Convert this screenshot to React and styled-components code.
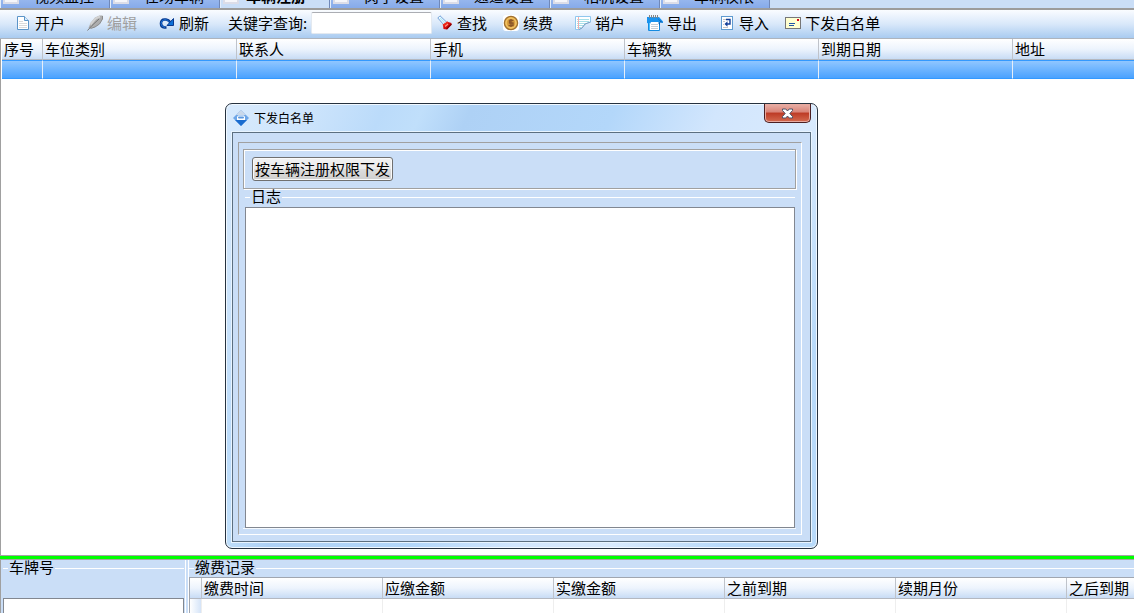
import React from 'react';
import styled, { createGlobalStyle } from 'styled-components';

const GlobalStyle = createGlobalStyle`
* { box-sizing: border-box; }
body {
  margin: 0;
  overflow: hidden;
  background: #ffffff;
  color: #000000;
  font-family: 'Noto Sans CJK SC', sans-serif;
  font-size: 15px;
}
button, input, textarea { font: inherit; color: inherit; }
`

const Page = styled.div`
display: flex;
flex-direction: column;
height: 100vh;
overflow: hidden;
`

const TabBar = styled.nav`
display: flex;
flex-shrink: 0;
align-items: flex-end;
height: 10px;
overflow: hidden;
background: #cadef7;
border-bottom: 2px solid #9c9c9c;
`

const Tab = styled.button`
display: flex;
flex-shrink: 0;
align-items: flex-end;
gap: ${props => (props.$active ? '7px' : '15px')};
width: 110px;
height: 24px;
padding: 0 0 4px 2px;
border: 0;
border-left: 1px solid #e4eefb;
border-right: 1px solid #7088b8;
background: ${props => (props.$active ? '#cadef7' : 'linear-gradient(#b6cff5, #86aaea)')};
font-weight: ${props => (props.$active ? 700 : 400)};
line-height: 16px;
white-space: nowrap;
`

const TabIcon = styled.span`
width: 16px;
height: 16px;
flex-shrink: 0;
border: 2px solid #dcdde8;
background: #f6f6fa;
`

const Toolbar = styled.div`
display: flex;
flex-shrink: 0;
align-items: center;
height: 29px;
padding: 0 0 2px 4px;
background: linear-gradient(#fafcff, #d9e8fa 50%, #a9cbf0);
border-bottom: 1px solid #aeb4bd;
`

const ToolButton = styled.button`
display: flex;
flex-shrink: 0;
align-items: center;
gap: 4px;
height: 26px;
padding: 0 11px 0 ${props => (props.$tight ? '5px' : '11px')};
border: 0;
background: transparent;
line-height: 20px;
white-space: nowrap;
&:disabled { color: #a0a0a0; }
svg { width: 16px; height: 16px; flex-shrink: 0; }
`

const SearchLabel = styled.label`
width: 91px;
padding-left: 8px;
line-height: 20px;
white-space: nowrap;
`

const SearchInput = styled.input`
width: 121px;
height: 22px;
padding: 0 3px;
border: 1px solid #e3e9f0;
border-top-color: #abadb3;
border-radius: 2px;
background: #ffffff;
`

const GridPanel = styled.main`
flex: 1;
min-height: 0;
overflow: hidden;
padding-left: 1px;
border-left: 1px solid #a0a0a0;
background: #ffffff;
`

const Grid = styled.table`
table-layout: fixed;
width: max-content;
min-width: ${props => props.$width}px;
border-collapse: separate;
border-spacing: 0;
`

const Column = styled.col`
width: ${props => props.$width}px;
`

const HeadCell = styled.th`
height: 21px;
padding: 0 0 0 2px;
border-right: 1px solid #bfc3ca;
border-bottom: 1px solid #b4b8c0;
background: linear-gradient(#ffffff, #edf4fd 50%, #c8dcf5);
font-weight: 400;
line-height: 18px;
text-align: left;
white-space: nowrap;
`

const SelectedCell = styled.td`
height: 19px;
padding: 0;
border-top: 1px solid #3399ff;
border-bottom: 1px solid #3399ff;
border-right: 1px solid #e6eef8;
background: linear-gradient(#90c6ff, #4aa2ff);
`

const EmptyCell = styled.td`
height: 20px;
padding: 0;
border-right: 1px solid #eeeeee;
background: ${props => (props.$marker ? 'linear-gradient(90deg, #ffffff, #d5e4f8)' : '#ffffff')};
`

const Splitter = styled.div`
flex-shrink: 0;
height: 5px;
background: #00ff00;
border-top: 1px solid #a4a4a4;
border-bottom: 1px solid #a4a4a4;
`

const BottomPane = styled.div`
display: flex;
flex-shrink: 0;
gap: 2px;
height: 53px;
overflow: hidden;
background: #cadef7;
border-left: 1px solid #a0a0a0;
`

const PlatePane = styled.section`
display: flex;
flex-direction: column;
width: 185px;
flex-shrink: 0;
padding: 0 1px 0 2px;
border-right: 1px solid #ffffff;
`

const RecordPane = styled.section`
flex: 1;
min-width: 0;
overflow: hidden;
border-left: 1px solid #ffffff;
`

const GroupTitle = styled.div`
display: flex;
flex-shrink: 0;
align-items: flex-start;
gap: 1px;
height: ${props => props.$height}px;
line-height: 14px;
white-space: nowrap;
&::before { content: ''; width: 5px; margin-top: 8px; border-top: 1px solid #ffffff; }
&::after { content: ''; flex: 1; margin-top: 8px; border-top: 1px solid #ffffff; }
`

const PlateList = styled.textarea`
width: 181px;
height: 60px;
flex-shrink: 0;
margin-top: 21px;
border: 1px solid #828790;
background: #ffffff;
resize: none;
`

const RecordGrid = styled.div`
border-top: 1px solid #a0a6b0;
border-left: 1px solid #a0a6b0;
background: #ffffff;
`

const Dialog = styled.div`
position: absolute;
left: 225px;
top: 103px;
display: flex;
flex-direction: column;
width: 593px;
padding: 0 6px 6px;
border: 1px solid #26323f;
border-radius: 7px;
background: linear-gradient(115deg, #d8eafd 0, #d0e6fc 9%, #bbdbfa 20%, #c0dffb 25%, #aed1f5 31%, #b3d7fa 49%, #d2e6fd 62%, #d9eafd 74%, #b8dafa 88%);
box-shadow: inset 0 0 0 1px #f0f8ff;
`

const TitleBar = styled.header`
display: flex;
align-items: flex-start;
height: 28px;
padding-left: 1px;
font-size: 12px;
svg { width: 16px; height: 16px; margin-top: 6px; }
`

const DialogTitle = styled.h1`
flex: 1;
margin: 0;
padding: 5px 0 0 5px;
font-size: 12px;
font-weight: 400;
line-height: 18px;
`

const CloseButton = styled.button`
display: flex;
align-items: center;
justify-content: center;
width: 47px;
height: 19px;
padding: 0;
border: 1px solid #4b1f22;
border-top: 0;
border-radius: 0 0 5px 5px;
background: linear-gradient(#e9b1a8, #d98377 45%, #bd3a25 50%, #d46b50);
box-shadow: inset 0 0 0 1px #e8aaa0;
&& svg { width: 13px; height: 11px; margin: 0; }
`

const DialogBody = styled.div`
padding: 9px 8px 6px 5px;
border: 1px solid #5c6f80;
background: #cadef7;
outline: 1px solid #e8f4ff;
`

const Sunken = styled.div`
padding: 6px 5px 5px 4px;
border: 1px solid #ffffff;
border-top-color: #a0a0a0;
border-left-color: #a0a0a0;
`

const ActionBox = styled.div`
display: flex;
align-items: center;
height: 40px;
padding-left: 8px;
border: 1px solid #a0a0a0;
box-shadow: inset 1px 1px #ffffff, 1px 1px #ffffff;
`

const SendButton = styled.button`
height: 24px;
padding: 0 2px;
border: 1px solid #707070;
border-radius: 3px;
background: linear-gradient(#f2f2f2, #ebebeb 50%, #dddddd 50%, #cfcfcf);
box-shadow: inset 0 0 0 1px #fafafa;
line-height: 20px;
white-space: nowrap;
`

const LogGroup = styled.div`
padding: 0 1px 0 2px;
border-bottom: 1px solid #f5faff;
`

const LogBox = styled.textarea`
display: block;
width: 100%;
height: 321px;
border: 1px solid #828790;
background: #ffffff;
resize: none;
`

const PageIcon = () => (
  <svg viewBox="0 0 16 16">
    <path d="M2.500 1.500H9.500L13.500 5.500V14.500H2.500Z" fill="#fff" stroke="#5b94c8" />
    <path d="M9.500 1.500V5.500H13.500" fill="#d9ecfb" stroke="#5b94c8" />
    <path d="M4 6.500H8M4 8.500H12M4 10.500H12M4 12.500H12" stroke="#dadada" />
  </svg>
)

const QuillIcon = () => (
  <svg viewBox="0 0 16 16">
    <path d="M1.500 13L3.500 8L8 2.500L12.500 0.500H15.500V4L12.500 9L8 12L3.500 13.500Z" fill="#adadad" />
    <path d="M3.500 9.500L8.500 3.500L13 1.500" stroke="#d2d2d2" strokeWidth="2" fill="none" />
    <path d="M15.500 1V4L12.500 9L8 12L3.500 13.500" stroke="#8a8a8a" fill="none" />
    <path d="M0.500 15.500L5 10.500L12 4" stroke="#777777" fill="none" />
  </svg>
)

const RefreshIcon = () => (
  <svg viewBox="0 0 16 16">
    <path d="M7.500 12.500H5.500Q2 12 2 8.500Q2 4.500 5.500 4.500H7Q9.500 4.800 11.500 7.500" fill="none" stroke="#08398f" strokeWidth="2.600" />
    <path d="M6 12.500Q2 11.500 2 8.500Q2.300 5 6 4.500Q9 4.800 11 7.500" fill="none" stroke="#1c72d8" strokeWidth="1" />
    <path d="M14.500 3.500V10.500H8Z" fill="#0c70d8" stroke="#08398f" />
  </svg>
)

const TorchIcon = () => (
  <svg viewBox="0 0 16 16">
    <path d="M0.800 3L3 0.800L10 7.500L7.500 10.500Z" fill="#f4fcff" stroke="#6f9fd8" />
    <path d="M3 3L8 8" stroke="#b5e8f8" strokeWidth="1.200" />
    <path d="M6 9.500L11 7L14.500 8L14 10L10 14.500L6.500 14Z" fill="#d50c0c" />
    <path d="M6 10.500L11 7" stroke="#ee2a1a" strokeWidth="2" />
    <path d="M8 11.500L11 9" stroke="#ff9a84" strokeWidth="1.200" />
    <path d="M9.500 14L14.500 9" stroke="#8a0000" strokeWidth="1.500" />
  </svg>
)

const CoinIcon = () => (
  <svg viewBox="0 0 16 16">
    <rect width="16" height="16" rx="3" fill="#fff" />
    <circle cx="8" cy="8" r="6.600" fill="#eeb64c" stroke="#a07030" strokeWidth="1.300" />
    <circle cx="8" cy="8" r="4.900" fill="#dca03d" stroke="#f5cb72" />
    <path d="M10.500 5.500H6.500V8H10V10.500H5.500M8 4V12" fill="none" stroke="#8b5627" strokeWidth="1.400" />
  </svg>
)

const SheetIcon = () => (
  <svg viewBox="0 0 16 16">
    <path d="M0.500 1.500H15.500V7L10 9L7 13L4 14.500H0.500Z" fill="#fff" stroke="#8fc7ee" />
    <path d="M2 4.500H14M2 6.500H14M2 8.500H10M2 10.500H8M2 12.500H6" stroke="#a6dfe8" />
    <path d="M3.500 2V14" stroke="#f5aeae" />
    <path d="M15.500 7L10 9L7 13L4 14.500" fill="none" stroke="#7e9fc1" />
  </svg>
)

const NotepadIcon = () => (
  <svg viewBox="0 0 16 16">
    <path d="M1.500 3.500H12.500V15.500H1.500Z" fill="#fff" stroke="#168be0" />
    <path d="M0 2H12L16 6.500V8L12 7H4L3 9L0 8Z" fill="#1a93ee" />
    <path d="M10 3L16 7.500H11L13 11V6Z" fill="#0764b8" />
    <path d="M2.500 0V3M4.500 0V3M6.500 0V3M8.500 0V3M10.500 0V3" stroke="#858585" />
    <path d="M4 9.500H11M4 11.500H11M4 13.500H11" stroke="#c4ced6" />
    <path d="M2.500 8V15" stroke="#4ac0ff" />
  </svg>
)

const ImportIcon = () => (
  <svg viewBox="0 0 16 16">
    <rect x="2.500" y="1.500" width="11" height="13" fill="#fff" stroke="#5f9bd0" />
    <path d="M4 4.500H7M4 6.500H6M4 9.500H5M4 12.500H9" stroke="#c4c4c4" />
    <path d="M7 4.500H11V9H8" fill="none" stroke="#123e98" strokeWidth="1.400" />
    <path d="M5.500 9L8.500 6.300V11.700Z" fill="#123e98" />
  </svg>
)

const LetterIcon = () => (
  <svg viewBox="0 0 16 16">
    <rect x="0.500" y="2.500" width="15" height="11" fill="#ffffd0" stroke="#777777" />
    <path d="M4 8.500H10M4 10.500H9" stroke="#1f56a8" />
    <rect x="12" y="4" width="2" height="2" fill="#d80020" />
  </svg>
)

const AppIcon = () => (
  <svg viewBox="0 0 16 16">
    <path d="M8 0L16 8L8 16L0 8Z" fill="#6ea6e8" />
    <path d="M8 0L13 5H3Z" fill="#c9d8ea" />
    <path d="M2 10L8 16L14 10Z" fill="#1a6ccf" />
    <path d="M5 5.500H11L12 7V10H4V7Z" fill="#fff" />
    <rect x="5" y="6.500" width="6" height="2" rx="1" fill="#5b97df" />
  </svg>
)

const CrossIcon = () => (
  <svg viewBox="0 0 13 11">
    <path d="M1.500 1H4.800L6.500 3L8.200 1H11.500V2.500L8.800 5.500L11.500 8.500V10H8.200L6.500 8L4.800 10H1.500V8.500L4.200 5.500L1.500 2.500Z" fill="#fff" stroke="#4d5368" />
  </svg>
)

const tabs = ['视频监控', '在场车辆', '车辆注册', '岗亭设置', '通道设置', '相机设置', '车辆权限']
const columns = ['序号', '车位类别', '联系人', '手机', '车辆数', '到期日期', '地址']
const records = ['', '缴费时间', '应缴金额', '实缴金额', '之前到期', '续期月份', '之后到期']

const columnWidth = (i) => (i === 0 ? 41 : 194)
const recordWidth = (i) => (i === 0 ? 12 : i === 1 ? 181 : 171)

export default function App() {
  return (
    <Page>
      <GlobalStyle />
      <TabBar>
        {tabs.map((name) => (
          <Tab key={name} type="button" $active={name === '车辆注册'}>
            <TabIcon />{name}
          </Tab>
        ))}
      </TabBar>

      <Toolbar>
        <ToolButton type="button"><PageIcon />开户</ToolButton>
        <ToolButton type="button" disabled><QuillIcon />编辑</ToolButton>
        <ToolButton type="button"><RefreshIcon />刷新</ToolButton>
        <SearchLabel htmlFor="keyword">关键字查询:</SearchLabel>
        <SearchInput id="keyword" type="text" />
        <ToolButton type="button" $tight><TorchIcon />查找</ToolButton>
        <ToolButton type="button" $tight><CoinIcon />续费</ToolButton>
        <ToolButton type="button"><SheetIcon />销户</ToolButton>
        <ToolButton type="button"><NotepadIcon />导出</ToolButton>
        <ToolButton type="button"><ImportIcon />导入</ToolButton>
        <ToolButton type="button" $tight><LetterIcon />下发白名单</ToolButton>
      </Toolbar>

      <GridPanel>
        <Grid $width={1205}>
          <colgroup>
            {columns.map((name, i) => <Column key={name} $width={columnWidth(i)} />)}
          </colgroup>
          <thead>
            <tr>{columns.map((name) => <HeadCell key={name}>{name}</HeadCell>)}</tr>
          </thead>
          <tbody>
            <tr>{columns.map((name) => <SelectedCell key={name} />)}</tr>
          </tbody>
        </Grid>
      </GridPanel>

      <Splitter />

      <BottomPane>
        <PlatePane>
          <GroupTitle $height={17}><label htmlFor="plates">车牌号</label></GroupTitle>
          <PlateList id="plates" />
        </PlatePane>
        <RecordPane>
          <GroupTitle $height={17}>缴费记录</GroupTitle>
          <RecordGrid>
            <Grid $width={1048}>
              <colgroup>
                {records.map((name, i) => <Column key={name} $width={recordWidth(i)} />)}
              </colgroup>
              <thead>
                <tr>{records.map((name) => <HeadCell key={name}>{name}</HeadCell>)}</tr>
              </thead>
              <tbody>
                <tr>{records.map((name, i) => <EmptyCell key={name} $marker={i === 0} />)}</tr>
              </tbody>
            </Grid>
          </RecordGrid>
        </RecordPane>
      </BottomPane>

      <Dialog role="dialog" aria-labelledby="dialog-title">
        <TitleBar>
          <AppIcon />
          <DialogTitle id="dialog-title">下发白名单</DialogTitle>
          <CloseButton type="button" aria-label="关闭"><CrossIcon /></CloseButton>
        </TitleBar>
        <DialogBody>
          <Sunken>
            <ActionBox>
              <SendButton type="button">按车辆注册权限下发</SendButton>
            </ActionBox>
            <LogGroup>
              <GroupTitle $height={18}><label htmlFor="log">日志</label></GroupTitle>
              <LogBox id="log" readOnly />
            </LogGroup>
          </Sunken>
        </DialogBody>
      </Dialog>
    </Page>
  )
}
